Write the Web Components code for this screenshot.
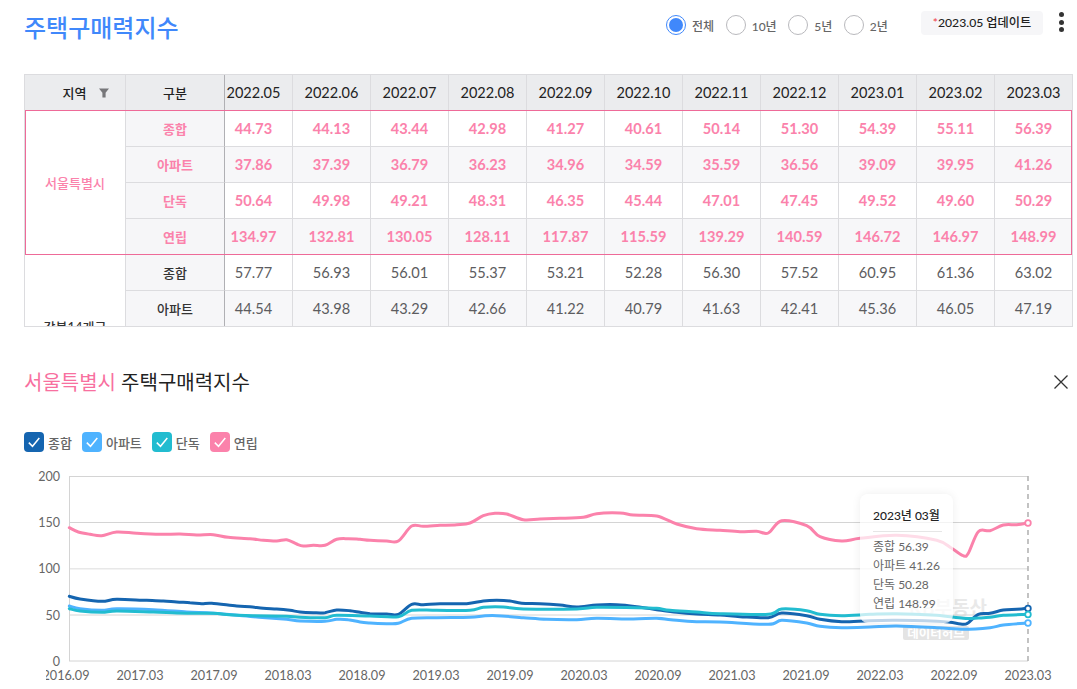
<!DOCTYPE html>
<html lang="ko">
<head>
<meta charset="utf-8">
<title>주택구매력지수</title>
<style>
  html, body { margin: 0; background: #fff; }
  body { font-family: Lato, "Noto Sans CJK KR", sans-serif; overflow: hidden; height: 689px; }
</style>
</head>
<body>
<index-page>
  <index-header>
    <radio-option checked>전체</radio-option>
    <radio-option>10년</radio-option>
    <radio-option>5년</radio-option>
    <radio-option>2년</radio-option>
  </index-header>
  <index-table></index-table>
  <chart-panel>
    <legend-chip color="#1565b0">종합</legend-chip>
    <legend-chip color="#4fb3ff">아파트</legend-chip>
    <legend-chip color="#22bcd0">단독</legend-chip>
    <legend-chip color="#fb82ab">연립</legend-chip>
    <line-chart slot="chart">
      <chart-tooltip>
        <span slot="title">2023년 03월</span>
        <div>종합 56.39</div>
        <div>아파트 41.26</div>
        <div>단독 50.28</div>
        <div>연립 148.99</div>
      </chart-tooltip>
    </line-chart>
  </chart-panel>
</index-page>

<script>
// Pagina completa
class IndexPage extends HTMLElement {
  connectedCallback() {
    this.attachShadow({mode: 'open'}).innerHTML = `
      <style>
        :host { display: block; width: 1077px; padding-left: 24px; box-sizing: border-box; }
      </style>
      <slot></slot>`;
  }
}

class IndexHeader extends HTMLElement {
  connectedCallback() {
    this.attachShadow({mode: 'open'}).innerHTML = `
      <style>
        :host { display: flex; height: 74px; align-items: flex-start; }
        h1 { margin: 10px 0 0; font-size: 24px; line-height: 36px; font-weight: 500; color: #4088fb; width: 642px; flex: none; }
        .options { display: flex; margin-top: 15px; width: 255px; flex: none; }
        .badge { margin-top: 11px; width: 122px; height: 24px; box-sizing: border-box; background: #f6f6f8; border-radius: 4px;
                 font-size: 12.2px; line-height: 24px; color: #222; text-align: center; font-weight: 500; }
        .badge b { color: #f0444c; font-weight: 500; }
        .more { margin: 11px 0 0 14px; width: 8px; height: 22px; display: flex; flex-direction: column; justify-content: space-between; padding: 1px 0; box-sizing: border-box; }
        .more i { display: block; width: 5px; height: 5px; border-radius: 50%; background: #333; margin: 0 auto; }
      </style>
      <h1>주택구매력지수</h1>
      <div class="options"><slot></slot></div>
      <div class="badge"><b>*</b>2023.05 업데이트</div>
      <div class="more"><i></i><i></i><i></i></div>`;
  }
}

class RadioOption extends HTMLElement {
  connectedCallback() {
    const on = this.hasAttribute('checked');
    this.attachShadow({mode: 'open'}).innerHTML = `
      <style>
        :host { display: inline-flex; align-items: center; height: 20px; margin-right: 11.6px; font-size: 12px; font-weight: 500; color: #666; }
        .dot { width: 20px; height: 20px; box-sizing: border-box; border-radius: 50%; background: #fff; margin-right: 6px;
               border: 1px solid ${on ? '#4088fb' : '#b9b9bd'}; display: flex; align-items: center; justify-content: center; }
        .dot i { display: ${on ? 'block' : 'none'}; width: 14px; height: 14px; border-radius: 50%; background: #4088fb; }
      </style>
      <span class="dot"><i></i></span><slot></slot>`;
  }
}

const MONTHS = ['2022.05','2022.06','2022.07','2022.08','2022.09','2022.10','2022.11','2022.12','2023.01','2023.02','2023.03'];
const GROUPS = [
  { name: '서울특별시', pink: true, rows: [
    ['종합','44.73','44.13','43.44','42.98','41.27','40.61','50.14','51.30','54.39','55.11','56.39'],
    ['아파트','37.86','37.39','36.79','36.23','34.96','34.59','35.59','36.56','39.09','39.95','41.26'],
    ['단독','50.64','49.98','49.21','48.31','46.35','45.44','47.01','47.45','49.52','49.60','50.29'],
    ['연립','134.97','132.81','130.05','128.11','117.87','115.59','139.29','140.59','146.72','146.97','148.99'],
  ]},
  { name: '강북14개구', rows: [
    ['종합','57.77','56.93','56.01','55.37','53.21','52.28','56.30','57.52','60.95','61.36','63.02'],
    ['아파트','44.54','43.98','43.29','42.66','41.22','40.79','41.63','42.41','45.36','46.05','47.19'],
    [], [],
  ]},
];

class IndexTable extends HTMLElement {
  connectedCallback() {
    let body = '';
    GROUPS.forEach(g => {
      g.rows.forEach((r, i) => {
        const cls = (g.pink ? 'pink ' : '') + (i % 2 ? 'even' : '');
        body += `<tr class="${cls}">`;
        if (i == 0) body += `<td class="region" rowspan="4">${g.name}</td>`;
        body += `<td class="kind">${r[0] || ''}</td>`;
        for (let c = 1; c <= 11; c++) body += `<td class="${c == 1 ? 'first' : ''}">${r[c] || ''}</td>`;
        body += '</tr>';
      });
    });
    this.attachShadow({mode: 'open'}).innerHTML = `
      <style>
        :host { display: block; position: relative; width: 1049px; height: 253px; box-sizing: border-box; border: 1px solid #dcdcdf; overflow: hidden; }
        table { border-collapse: separate; border-spacing: 0; table-layout: fixed; width: 1048px; font-size: 14.6px; }
        th, td { height: 36px; box-sizing: border-box; padding: 0; text-align: center; border-right: 1px solid #dcdcdf; border-bottom: 1px solid #dcdcdf; }
        th { background: #ebecee; color: #222; font-weight: 400; font-size: 14.5px; }
        th.ko { font-size: 13px; font-weight: 500; }
        th .in { display: flex; align-items: center; justify-content: center; gap: 13px; padding-left: 22px; }
        td { color: #5c5c60; background: #fff; }
        tr.even td { background: #f7f7f9; }
        td.region { background: #fff !important; font-size: 13px; font-weight: 500; color: #333; }
        td.kind { background: #f6f6f8 !important; font-size: 13px; font-weight: 500; color: #333; border-right-color: #b0b0b4; }
        th.kind { border-right-color: #b0b0b4; }
        .first { padding-right: 10px; }
        tr.pink td { color: #fb82ab; font-weight: 700; }
        tr.pink td.region { font-weight: 500; }
        .outline { position: absolute; left: 0; top: 35px; width: 1047px; height: 145px; box-sizing: border-box; border: 1px solid #ee6a98; pointer-events: none; }
      </style>
      <table>
        <colgroup><col style="width:101px"><col style="width:99px"><col style="width:68px">${'<col style="width:78px">'.repeat(10)}</colgroup>
        <thead><tr>
          <th class="ko"><div class="in">지역
            <svg width="10" height="10" viewBox="0 0 10 10"><path d="M0 .5h10L6.6 4.8v4.7H3.4V4.8z" fill="#77777a"/></svg>
          </div></th>
          <th class="ko kind">구분</th>
          ${MONTHS.map((m, i) => `<th class="${i == 0 ? 'first' : ''}">${m}</th>`).join('')}
        </tr></thead>
        <tbody>${body}</tbody>
      </table>
      <div class="outline"></div>`;
  }
}

class ChartPanel extends HTMLElement {
  connectedCallback() {
    this.attachShadow({mode: 'open'}).innerHTML = `
      <style>
        :host { display: block; width: 1049px; }
        .head { display: flex; justify-content: space-between; align-items: center; margin-top: 40px; height: 30px; }
        h2 { margin: 0; font-size: 20px; font-weight: 400; color: #222; line-height: 30px; }
        h2 span { color: #f8709f; }
        .close { margin-right: 4px; width: 16px; height: 16px; }
        .legend { display: flex; gap: 10px; margin-top: 35px; height: 20px; }
        .chart { margin-top: 10px; margin-left: 0; }
      </style>
      <div class="head">
        <h2><span>서울특별시</span> 주택구매력지수</h2>
        <svg class="close" viewBox="0 0 16 16"><path d="M1.5 1.5l13 13M14.5 1.5l-13 13" stroke="#333" stroke-width="1.3" fill="none"/></svg>
      </div>
      <div class="legend"><slot></slot></div>
      <div class="chart"><slot name="chart"></slot></div>`;
  }
}

class LegendChip extends HTMLElement {
  connectedCallback() {
    const color = this.getAttribute('color');
    this.attachShadow({mode: 'open'}).innerHTML = `
      <style>
        :host { display: inline-flex; align-items: center; gap: 4px; font-size: 13px; color: #666; font-weight: 500; height: 20px; }
        svg { display: block; }
      </style>
      <svg width="20" height="20" viewBox="0 0 20 20">
        <rect width="20" height="20" rx="4" fill="${color}"/>
        <path d="M4.8 10.6l3.7 3.7 6.8-8.2" fill="none" stroke="#fff" stroke-width="1.5"/>
      </svg>
      <slot></slot>`;
  }
}

// Puntos trazados: [inicio x del tramo, x/y en escala 3x, ...], inicio y = 460
const Z4 = 20, Z5 = 370, Z6 = 720;
const SERIES = [
  { color: '#1565b0', end: [1028, 608.5], parts: [
    [Z4, [148,409,180,417,245,424,290,418,380,421,430,423,470,426,510,428,545,431,575,430,650,438,690,440,730,445,770,447,810,451,840,456,880,458,915,458,950,450,990,452,1020,457]],
    [Z5, [0,461,50,462,85,463,125,433,160,434,210,431,290,431,340,423,380,421,420,423,455,430,510,431,570,435,620,441,680,435,740,434,800,440,860,449,920,457,980,462]],
    [Z6, [0,465,60,470,145,473,185,459,260,467,300,478,365,485,450,482,530,481,650,484,690,487,730,493,745,488,775,463,810,460,850,450,890,448,925,445]],
  ]},
  { color: '#4fb3ff', end: [1028, 623], parts: [
    [Z4, [148,438,180,446,245,451,290,446,400,449,500,456,580,460,700,470,800,478,840,483,915,484,950,478,985,479,1020,486]],
    [Z5, [0,489,50,491,85,490,125,475,200,473,300,472,340,468,380,467,460,473,530,478,620,479,680,475,790,477,860,475,920,481,980,485]],
    [Z6, [0,486,145,493,185,481,260,489,300,499,365,503,450,501,530,498,650,503,730,508,810,503,850,495,925,489]],
  ]},
  { color: '#22bcd0', end: [1028, 614.5], parts: [
    [Z4, [148,446,180,453,245,457,290,453,400,456,470,459,530,460,580,460,640,465,700,467,800,469,840,472,915,473,950,466]],
    [Z5, [0,468,85,470,125,451,200,451,300,451,340,442,400,441,460,447,620,447,680,442,800,443,860,445,900,451,980,456]],
    [Z6, [0,461,145,463,185,447,260,452,300,463,365,467,450,463,530,461,650,466,730,475,775,474,810,472,850,466,925,463]],
  ]},
  { color: '#fb82ab', end: [1028, 523], parts: [
    [Z4, [148,203,175,216,210,223,245,227,290,216,350,220,420,223,480,222,530,225,580,224,625,232,690,236,730,241,770,243,800,239,830,252,850,258,880,256,915,256,950,238,985,236,1020,238]],
    [Z5, [0,241,50,243,85,243,125,198,160,199,210,196,260,194,300,189,340,167,375,160,410,162,460,179,510,177,570,175,640,172,680,161,750,159,790,165,860,168,920,192,980,206]],
    [Z6, [0,211,60,215,110,214,145,219,185,182,260,197,300,230,365,243,420,235,530,226,650,241,695,265,730,287,745,280,775,215,810,212,850,195,890,194,925,189]],
  ]},
];

function toPoints(parts) {
  const pts = [];
  parts.forEach(([ox, list]) => {
    for (let i = 0; i < list.length; i += 2) pts.push([ox + list[i] / 3, 460 + list[i + 1] / 3]);
  });
  return pts;
}

function smooth(p) {
  let d = `M${p[0][0].toFixed(1)} ${p[0][1].toFixed(1)}`;
  for (let i = 0; i < p.length - 1; i++) {
    const a = p[i - 1] || p[i], b = p[i], c = p[i + 1], e = p[i + 2] || c;
    const c1 = [b[0] + (c[0] - a[0]) / 6, b[1] + (c[1] - a[1]) / 6];
    const c2 = [c[0] - (e[0] - b[0]) / 6, c[1] - (e[1] - b[1]) / 6];
    d += `C${c1[0].toFixed(1)} ${c1[1].toFixed(1)} ${c2[0].toFixed(1)} ${c2[1].toFixed(1)} ${c[0].toFixed(1)} ${c[1].toFixed(1)}`;
  }
  return d;
}

class LineChart extends HTMLElement {
  connectedCallback() {
    const labels = ['2016.09','2017.03','2017.09','2018.03','2018.09','2019.03','2019.09','2020.03','2020.09','2021.03','2021.09','2022.03','2022.09','2023.03'];
    const ticks = [[200,476.5],[150,522.5],[100,568.7],[50,615],[0,661]];
    this.attachShadow({mode: 'open'}).innerHTML = `
      <style>
        :host { display: block; position: relative; width: 1049px; height: 227px; }
        svg { display: block; font-family: Lato, "Noto Sans CJK KR", sans-serif; }
        .tick { font-size: 12.5px; fill: #666; }
        .mark { font-size: 12.7px; fill: #666; }
      </style>
      <svg width="1049" height="227" viewBox="24 462 1049 227">
        <defs><clipPath id="axis"><rect x="46" y="662" width="1027" height="27"/></clipPath></defs>
        <text x="987" y="615" text-anchor="end" font-size="19" font-weight="700" fill="#e9e9e9">KB부동산</text>
        <rect x="903" y="626" width="66" height="14" rx="2" fill="#e4e4e4"/>
        <text x="936" y="637.5" text-anchor="middle" font-size="12.5" font-weight="700" fill="#fff">데이터허브</text>
        ${ticks.map(t => `<line x1="69" x2="1028" y1="${t[1]}" y2="${t[1]}" stroke="${t[0] == 100 ? '#e8e8e8' : '#d4d4d4'}" stroke-width="${t[0] == 100 ? 1.4 : 1}"/>
          <text class="tick" x="60" y="${t[1] + 4.5}" text-anchor="end">${t[0]}</text>`).join('')}
        <line x1="69.5" x2="69.5" y1="476" y2="661" stroke="#d4d4d4"/>
        <g clip-path="url(#axis)">
          ${labels.map((l, i) => `<text class="mark" x="${66 + 74 * i}" y="680" text-anchor="middle">${l}</text>`).join('')}
        </g>
        <line x1="1028" x2="1028" y1="476" y2="661" stroke="#b4b4b4" stroke-width="1.6" stroke-dasharray="5 4"/>
        ${SERIES.map(s => `<path d="${smooth(toPoints(s.parts))}" fill="none" stroke="${s.color}" stroke-width="3" stroke-linejoin="round" stroke-linecap="round"/>`).join('')}
        ${SERIES.map(s => `<circle cx="${s.end[0]}" cy="${s.end[1]}" r="2.8" fill="#fff" stroke="${s.color}" stroke-width="1.8"/>`).join('')}
      </svg>
      <slot></slot>`;
  }
}

class ChartTooltip extends HTMLElement {
  connectedCallback() {
    this.attachShadow({mode: 'open'}).innerHTML = `
      <style>
        :host { position: absolute; left: 836px; top: 32px; width: 93px; height: 129px; box-sizing: border-box; padding: 12px 12px 0 13px;
                background: rgba(255,255,255,.72); border-radius: 8px; box-shadow: 0 0 10px rgba(0,0,0,.07);
                font-size: 12px; line-height: 19px; color: #666; white-space: nowrap; font-weight: 400; }
        .title { color: #222; font-weight: 500; height: 25px; border-bottom: 1px solid #e6e6e6; margin-bottom: 5px; margin-right: -1px; }
      </style>
      <div class="title"><slot name="title"></slot></div>
      <slot></slot>`;
  }
}

customElements.define('index-page', IndexPage);
customElements.define('index-header', IndexHeader);
customElements.define('radio-option', RadioOption);
customElements.define('index-table', IndexTable);
customElements.define('chart-panel', ChartPanel);
customElements.define('legend-chip', LegendChip);
customElements.define('line-chart', LineChart);
customElements.define('chart-tooltip', ChartTooltip);
</script>
</body>
</html>
